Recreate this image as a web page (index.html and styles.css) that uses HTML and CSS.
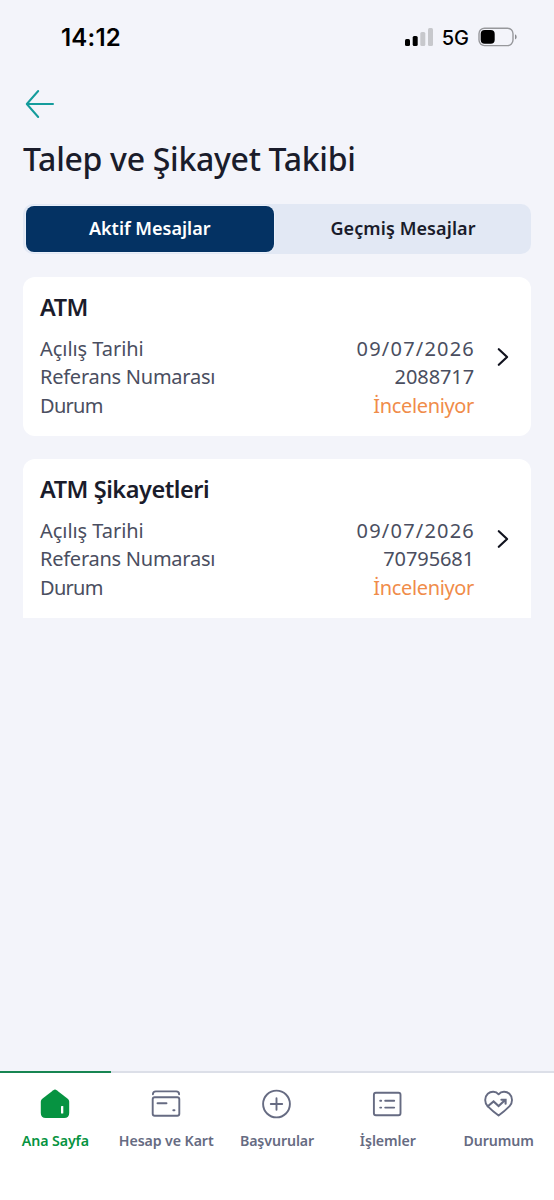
FILE: index.html
```html
<!DOCTYPE html>
<html lang="tr">
<head>
<meta charset="utf-8">
<title>Talep ve Şikayet Takibi</title>
<link rel="stylesheet" href="styles.css">
</head>
<body>
<div class="screen">
  <header class="status">
    <span class="clock">14:12</span>
    <div class="indicators">
      <svg class="signal" width="28" height="18" viewBox="0 0 28 18">
        <rect x="0" y="11" width="5" height="7" rx="1.5" fill="#000"/>
        <rect x="7.7" y="8" width="5" height="10" rx="1.5" fill="#000"/>
        <rect x="15.3" y="4" width="5" height="14" rx="1.5" fill="#c7c8cc"/>
        <rect x="23" y="0" width="5" height="18" rx="1.5" fill="#c7c8cc"/>
      </svg>
      <span class="network">5G</span>
      <svg class="battery" width="39" height="20" viewBox="0 0 39 20">
        <rect x="1" y="1.2" width="34" height="17.4" rx="5.5" fill="none" stroke="#97989c" stroke-width="1.4"/>
        <rect x="2.7" y="3" width="14" height="13.8" rx="4" fill="#000"/>
        <path d="M37 7.2q1.7.9 1.7 2.7T37 12.6z" fill="#8b8c90"/>
      </svg>
    </div>
  </header>

  <main class="content">
    <svg class="back" width="30" height="30" viewBox="0 0 30 30">
      <path d="M13.2 2 1.8 15l11.4 13M2 15h26" fill="none" stroke="#149c9c" stroke-width="2" stroke-linecap="round" stroke-linejoin="round"/>
    </svg>
    <h1 class="title">Talep ve Şikayet Takibi</h1>

    <div class="tabs">
      <div class="tab tab-active">Aktif Mesajlar</div>
      <div class="tab tab-past">Geçmiş Mesajlar</div>
    </div>

    <section class="card">
      <h2 class="card-title">ATM</h2>
      <div class="card-body">
        <dl class="details">
          <dt class="opened">Açılış Tarihi</dt><dd class="date">09/07/2026</dd>
          <dt>Referans Numarası</dt><dd class="number">2088717</dd>
          <dt class="state">Durum</dt><dd class="pending">İnceleniyor</dd>
        </dl>
        <svg class="chevron" width="12" height="20" viewBox="0 0 12 20">
          <path d="m1.8 2.200 8.300 7.800-8.300 7.800" fill="none" stroke="#11131f" stroke-width="2.200" stroke-linecap="round" stroke-linejoin="round"/>
        </svg>
      </div>
    </section>

    <section class="card card-cut">
      <h2 class="card-title">ATM Şikayetleri</h2>
      <div class="card-body">
        <dl class="details">
          <dt class="opened">Açılış Tarihi</dt><dd class="date">09/07/2026</dd>
          <dt>Referans Numarası</dt><dd class="number">70795681</dd>
          <dt class="state">Durum</dt><dd class="pending">İnceleniyor</dd>
        </dl>
        <svg class="chevron" width="12" height="20" viewBox="0 0 12 20">
          <path d="m1.8 2.200 8.300 7.800-8.300 7.800" fill="none" stroke="#11131f" stroke-width="2.200" stroke-linecap="round" stroke-linejoin="round"/>
        </svg>
      </div>
    </section>
  </main>

  <nav class="nav">
    <a class="nav-item nav-active">
      <svg width="32" height="32" viewBox="0 0 32 32">
        <path d="M14.3 2.200q1.700-1.200 3.400 0l11 8.500q1.500 1.200 1.500 3V25q0 5-5 5H6.800q-5 0-5-5V13.700q0-1.800 1.500-3z" fill="#069341"/>
        <rect x="22" y="18" width="2.300" height="7.500" rx=".6" fill="#fff"/>
      </svg>
      <span>Ana Sayfa</span>
    </a>
    <a class="nav-item">
      <svg width="32" height="32" viewBox="0 0 32 32" fill="none" stroke="#666b82" stroke-width="1.900" stroke-linecap="round" stroke-linejoin="round">
        <path d="M2.900 6.200q0-2.800 2.900-2.800h20.400q2.900 0 2.900 2.800"/>
        <rect x="2.700" y="9.200" width="26.600" height="18.600" rx="2"/>
        <path d="M7.500 15.200h9M23.300 22.300h1.200"/>
      </svg>
      <span>Hesap ve Kart</span>
    </a>
    <a class="nav-item">
      <svg width="32" height="32" viewBox="0.5 0 32 32" fill="none" stroke="#666b82" stroke-width="1.900" stroke-linecap="round">
        <circle cx="16" cy="16" r="13.400"/>
        <path d="M16 10.300v11.400M10.300 16h11.400"/>
      </svg>
      <span>Başvurular</span>
    </a>
    <a class="nav-item">
      <svg width="32" height="32" viewBox="0.8 0 32 32" fill="none" stroke="#666b82" stroke-width="1.900" stroke-linecap="round" stroke-linejoin="round">
        <rect x="2.700" y="4.800" width="26.600" height="22.400" rx="2"/>
        <path d="M9 12.700h1M14 12.700h9M9 19.600h1M14 19.600h9"/>
      </svg>
      <span>İşlemler</span>
    </a>
    <a class="nav-item">
      <svg width="32" height="32" viewBox="0.4 0 32 32" fill="none" stroke="#666b82" stroke-width="1.900" stroke-linecap="round" stroke-linejoin="round">
        <path d="M16 6.300C13.200 3 8.200 3.100 5.200 5.800 1.600 9.200 1.900 14.800 5 18.100Q9.800 23 16 27.600 22.200 23 27 18.100C30.100 14.800 30.400 9.200 26.800 5.800 23.800 3.100 18.800 3 16 6.300z"/>
        <path d="m5.200 18.300 5.800-4.800 5 4.500 6-5.500M18.800 11.800h4.200v4" stroke-width="2.100" stroke-linejoin="miter"/>
      </svg>
      <span>Durumum</span>
    </a>
  </nav>
</div>
</body>
</html>
```
FILE: styles.css
```css
* { box-sizing: border-box; }

body {
  margin: 0;
  background: #f3f4fa;
  color: #1a1c2b;
  font-family: "Noto Sans", "Open Sans", sans-serif;
}

svg { display: block; flex: none; }

.screen {
  width: 554px;
  height: 1200px;
  display: flex;
  flex-direction: column;
  overflow: hidden;
}

.status {
  height: 74px;
  padding: 0 37px 0 61px;
  display: flex;
  align-items: center;
  justify-content: space-between;
  color: #000;
  font-family: Inter, sans-serif;
}

.clock {
  padding-top: 1px;
  font-size: 24px;
  font-weight: 600;
  line-height: 30px;
  letter-spacing: 0.2px;
}

.indicators { display: flex; align-items: center; }

.network {
  margin: 0 9px;
  padding-top: 1px;
  font-size: 20px;
  font-weight: 500;
  line-height: 24px;
}

.content {
  flex: 1;
  padding: 15px 23px 0;
}

.back { margin-left: 2px; }

.title {
  margin: 17px 0 0;
  height: 46px;
  font-size: 32px;
  font-weight: 500;
  line-height: 45px;
  letter-spacing: -0.3px;
  white-space: nowrap;
}

.tabs {
  display: flex;
  height: 50px;
  margin-top: 22px;
  padding: 2px 2px 2.5px 2.5px;
  border-radius: 10px;
  background: #e2e8f4;
}

.tab {
  flex: 1;
  display: flex;
  align-items: center;
  justify-content: center;
  padding-bottom: 2px;
  font-size: 18px;
  font-weight: 600;
}

.tab-past { padding-left: 3px; letter-spacing: 0.1px; }

.tab-active {
  flex: 0 0 248.5px;
  border-radius: 8px;
  background: #043263;
  box-shadow: 0 0 0 1px #eaf0fa;
  color: #fff;
}

.card {
  height: 159px;
  margin-top: 23px;
  padding: 13px 17px 0;
  border-radius: 12px;
  background: #fff;
}

.card-cut { border-radius: 12px 12px 0 0; }

.card-title {
  margin: 0;
  font-size: 23.5px;
  font-weight: 600;
  line-height: 34px;
  letter-spacing: -0.45px;
}

.card-body {
  display: flex;
  align-items: flex-start;
  margin-top: 11px;
}

.details {
  flex: none;
  width: 434px;
  margin: 0;
  display: grid;
  grid-template-columns: auto 1fr;
  grid-auto-rows: 28.4px;
  color: #4a4e60;
  font-size: 20px;
  font-weight: 400;
  line-height: 28.4px;
  letter-spacing: -0.25px;
}

.details dd { margin: 0; text-align: right; }

.details .opened { letter-spacing: -0.05px; }

.details .date { margin-right: -1px; letter-spacing: 1.2px; }

.details .number { letter-spacing: -0.1px; }

.details .state { letter-spacing: -0.7px; }

.details .pending { color: #f08c4a; letter-spacing: -0.35px; }

.chevron { margin: 12px 0 0 23px; }

.nav {
  height: 129px;
  display: grid;
  grid-template-columns: repeat(5, 1fr);
  border-top: 2px solid #dcdfe8;
  background: #fff;
}

.nav-item {
  display: flex;
  flex-direction: column;
  align-items: center;
  margin-top: -2px;
  padding-top: 15px;
  border-top: 2px solid transparent;
  color: #666b82;
  font-size: 14.2px;
  font-weight: 600;
  line-height: 20px;
  letter-spacing: -0.1px;
  white-space: nowrap;
}

.nav-item span { margin-top: 11px; }

.nav-active { border-top-color: #178552; color: #069341; }
```
